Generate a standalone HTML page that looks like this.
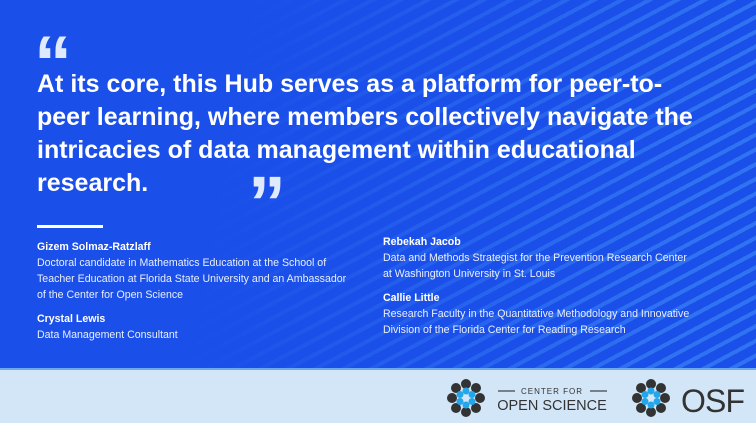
<!DOCTYPE html>
<html><head><style>
*{margin:0;padding:0;box-sizing:border-box}
body{width:756px;height:423px;overflow:hidden;font-family:"Liberation Sans",sans-serif;background:#1b50ea;position:relative}
.bg{position:absolute;left:0;top:0;width:756px;height:368px;background:#1b4fe9;overflow:hidden}
.stripes{position:absolute;left:0;top:0;width:756px;height:368px;
background:repeating-linear-gradient(-28deg,rgba(90,170,255,0) 0 9px,rgba(80,170,255,.4) 9px 13px);
-webkit-mask-image:linear-gradient(100deg,transparent 30%,rgba(0,0,0,.5) 60%,#000 90%);mask-image:linear-gradient(100deg,transparent 30%,rgba(0,0,0,.5) 60%,#000 90%)}
.q{position:absolute;color:#dfeafc;font-weight:bold;font-family:"Liberation Sans",sans-serif;font-size:76px;line-height:1}
.main{position:absolute;left:37px;top:68px;width:720px;color:#fff;font-weight:bold;font-size:25px;line-height:33px;white-space:nowrap}
.rule{position:absolute;left:37px;top:225px;width:66px;height:3px;background:#fff}
.p{position:absolute;color:#e8effd;font-size:10.6px;line-height:16px}
.p b{color:#fff;display:block}
.foot{position:absolute;left:0;top:368px;width:756px;height:55px;background:#d3e6f8;border-top:2px solid #6aa8f0}
</style></head><body>
<div class="bg"><div class="stripes"></div></div>
<div class="q" style="left:34px;top:26px">&#8220;</div>
<div class="main">At its core, this Hub serves as a platform for peer-to-<br>peer learning, where members collectively navigate the<br>intricacies of data management within educational<br>research.</div>
<div class="q" style="left:248px;top:166px">&#8221;</div>
<div class="rule"></div>
<div class="p" style="left:37px;top:239px"><b>Gizem Solmaz-Ratzlaff</b>Doctoral candidate in Mathematics Education at the School of<br>Teacher Education at Florida State University and an Ambassador<br>of the Center for Open Science</div>
<div class="p" style="left:37px;top:311px"><b>Crystal Lewis</b>Data Management Consultant</div>
<div class="p" style="left:383px;top:234px"><b>Rebekah Jacob</b>Data and Methods Strategist for the Prevention Research Center<br>at Washington University in St. Louis</div>
<div class="p" style="left:383px;top:290px"><b>Callie Little</b>Research Faculty in the Quantitative Methodology and Innovative<br>Division of the Florida Center for Reading Research</div>
<div class="foot">
<svg width="756" height="55" style="position:absolute;left:0;top:-2px">
<g id="lg" transform="translate(466,30)">
<circle cx="0" cy="-14" r="5" fill="#333"/><circle cx="10" cy="-10" r="5" fill="#333"/><circle cx="14" cy="0" r="5" fill="#333"/><circle cx="10" cy="10" r="5" fill="#333"/><circle cx="0" cy="14" r="5" fill="#333"/><circle cx="-10" cy="10" r="5" fill="#333"/><circle cx="-14" cy="0" r="5" fill="#333"/><circle cx="-10" cy="-10" r="5" fill="#333"/>
<circle cx="0" cy="-7" r="3.5" fill="#23a6ea"/><circle cx="6" cy="3.5" r="3.5" fill="#23a6ea"/><circle cx="-6" cy="3.5" r="3.5" fill="#23a6ea"/><circle cx="6" cy="-3.5" r="3.5" fill="#23a6ea"/><circle cx="-6" cy="-3.5" r="3.5" fill="#23a6ea"/><circle cx="0" cy="7" r="3.5" fill="#23a6ea"/>
</g>
<use href="#lg" x="185" y="0"/>
<line x1="498" y1="23" x2="515" y2="23" stroke="#444" stroke-width="1.2"/>
<line x1="590" y1="23" x2="607" y2="23" stroke="#444" stroke-width="1.2"/>
<text x="552" y="26" text-anchor="middle" font-size="8" fill="#333" font-family="Liberation Sans" letter-spacing="1">CENTER FOR</text>
<text x="552" y="42" text-anchor="middle" font-size="14.5" fill="#333" font-family="Liberation Sans">OPEN SCIENCE</text>
<text x="681" y="44" font-size="32" fill="#333" font-family="Liberation Sans" textLength="64">OSF</text>
</svg>
</div>
</body></html>
